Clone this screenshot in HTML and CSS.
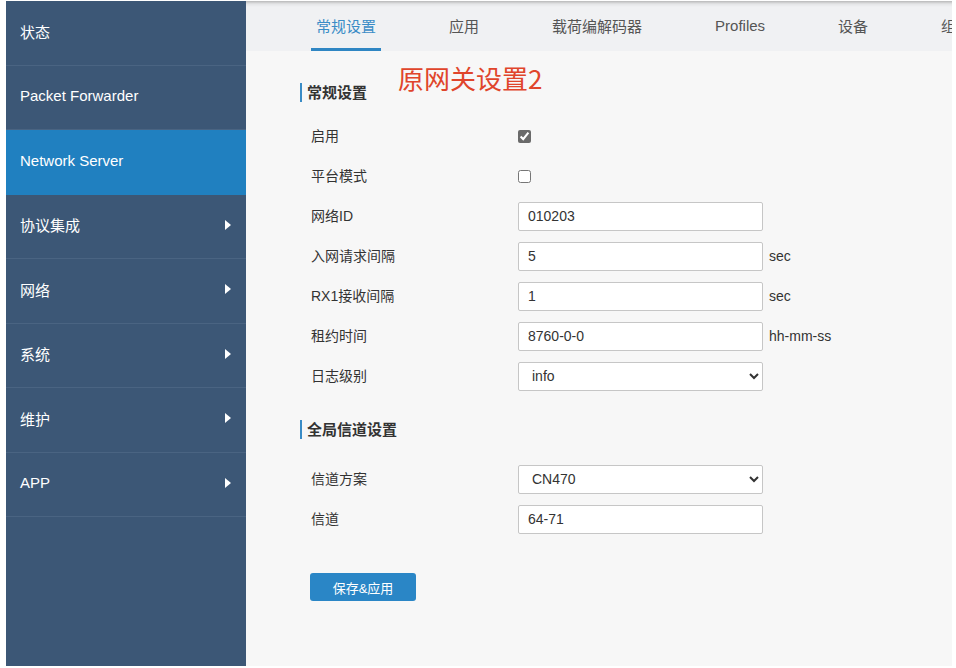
FILE: index.html
```html
<!DOCTYPE html>
<html lang="zh-CN">
<head>
<meta charset="utf-8">
<title>Network Server</title>
<link rel="stylesheet" href="styles.css">
</head>
<body>
<div class="page">
  <nav class="sidebar">
    <div class="nav-item">状态</div>
    <div class="nav-item">Packet Forwarder</div>
    <div class="nav-item active">Network Server</div>
    <div class="nav-item">协议集成<span class="caret"></span></div>
    <div class="nav-item">网络<span class="caret"></span></div>
    <div class="nav-item">系统<span class="caret"></span></div>
    <div class="nav-item">维护<span class="caret"></span></div>
    <div class="nav-item">APP<span class="caret"></span></div>
  </nav>
  <main class="main">
    <div class="tabs">
      <div class="tab active">常规设置</div>
      <div class="tab">应用</div>
      <div class="tab">载荷编解码器</div>
      <div class="tab">Profiles</div>
      <div class="tab">设备</div>
      <div class="tab">组</div>
    </div>
    <div class="content">
      <div class="head-row">
        <h3 class="section-title">常规设置</h3>
        <span class="note">原网关设置2</span>
      </div>
      <div class="form">
        <div class="row"><label class="lbl">启用</label><div class="ctl"><input type="checkbox" class="chk" checked></div></div>
        <div class="row"><label class="lbl">平台模式</label><div class="ctl"><input type="checkbox" class="chk"></div></div>
        <div class="row"><label class="lbl">网络ID</label><div class="ctl"><input class="inp" type="text" value="010203"></div></div>
        <div class="row"><label class="lbl">入网请求间隔</label><div class="ctl"><input class="inp" type="text" value="5"><span class="unit">sec</span></div></div>
        <div class="row"><label class="lbl">RX1接收间隔</label><div class="ctl"><input class="inp" type="text" value="1"><span class="unit">sec</span></div></div>
        <div class="row"><label class="lbl">租约时间</label><div class="ctl"><input class="inp" type="text" value="8760-0-0"><span class="unit">hh-mm-ss</span></div></div>
        <div class="row"><label class="lbl">日志级别</label><div class="ctl"><select class="sel"><option>info</option></select></div></div>
      </div>
      <h3 class="section-title second">全局信道设置</h3>
      <div class="form form-2">
        <div class="row"><label class="lbl">信道方案</label><div class="ctl"><select class="sel"><option>CN470</option></select></div></div>
        <div class="row"><label class="lbl">信道</label><div class="ctl"><input class="inp" type="text" value="64-71"></div></div>
      </div>
      <button class="btn" type="button">保存&amp;应用</button>
    </div>
  </main>
</div>
</body>
</html>
```
FILE: styles.css
```css
* { box-sizing: border-box; }
html, body { margin: 0; padding: 0; background: #ffffff; }
body {
  font-family: "Liberation Sans", "Noto Sans CJK SC", sans-serif;
  color: #333;
  width: 956px;
  height: 668px;
  overflow: hidden;
}
.page {
  display: flex;
  margin: 1px 4px 0 6px;
  height: 665px;
}
.sidebar {
  width: 240px;
  flex: none;
  background: #3c5776;
  display: flex;
  flex-direction: column;
}
.nav-item {
  height: 64.5px;
  border-bottom: 1px solid #4a6482;
  display: flex;
  align-items: center;
  justify-content: space-between;
  padding: 0 15px 3px 14px;
  color: #fff;
  font-size: 15px;
}
.nav-item.active { background: #2080c0; border-bottom-color: #2080c0; }
.caret {
  width: 0; height: 0;
  border-top: 5px solid transparent;
  border-bottom: 5px solid transparent;
  border-left: 6px solid #fff;
}
.main {
  flex: 1;
  background: #f7f7f7;
  display: flex;
  flex-direction: column;
  overflow: hidden;
}
.tabs {
  height: 50px;
  flex: none;
  background: linear-gradient(#b9b9b9 0, #e4e5e7 3px, #f0f1f3 6px, #f0f1f3 100%);
  display: flex;
  gap: 63px;
  padding-left: 65px;
  white-space: nowrap;
}
.tab {
  padding: 0 5px;
  font-size: 15px;
  color: #555;
  display: flex;
  align-items: center;
  border-bottom: 3px solid transparent;
  padding-top: 2px;
}
.tab.active { color: #3a8cc6; border-bottom-color: #2f86c3; }
.content {
  padding: 12px 0 0 54px;
}
.head-row {
  display: flex;
  align-items: flex-start;
  gap: 31px;
}
.section-title {
  margin: 20px 0 0;
  font-size: 15px;
  font-weight: bold;
  line-height: 20px;
  color: #333;
  border-left: 2px solid #3a8cc6;
  padding-left: 5px;
  height: 19px;
  display: flex;
  align-items: center;
}
.section-title.second { margin-top: 24px; }
.note {
  font-size: 26px;
  line-height: 32px;
  color: #e0452b;
  font-family: "Noto Sans CJK SC", "Liberation Sans", sans-serif;
  margin-top: -1px;
}
.form { margin-top: 14px; padding-left: 11px; }
.form-2 { margin-top: 20px; }
.row {
  display: flex;
  align-items: center;
  height: 40px;
}
.lbl {
  width: 207px;
  flex: none;
  font-size: 14px;
  color: #333;
  padding-bottom: 2px;
}
.ctl {
  display: flex;
  align-items: center;
}
.chk {
  margin: 0;
  width: 13px;
  height: 13px;
  accent-color: #6a6a6a;
}
.inp, .sel {
  width: 245px;
  height: 29px;
  border: 1px solid #c6c6c6;
  border-radius: 2px;
  background: #fff;
  font-family: "Liberation Sans", "Noto Sans CJK SC", sans-serif;
  font-size: 14px;
  color: #333;
  padding: 0 9px;
  margin: 0;
}
.sel { padding-left: 9px; }
.unit {
  margin-left: 6px;
  font-size: 14px;
  color: #333;
}
.btn {
  margin: 34px 0 0 10px;
  width: 106px;
  height: 28px;
  border: 0;
  border-radius: 3px;
  background: #2a86c6;
  color: #fff;
  font-family: "Liberation Sans", "Noto Sans CJK SC", sans-serif;
  font-size: 13px;
  padding: 0;
}
```
